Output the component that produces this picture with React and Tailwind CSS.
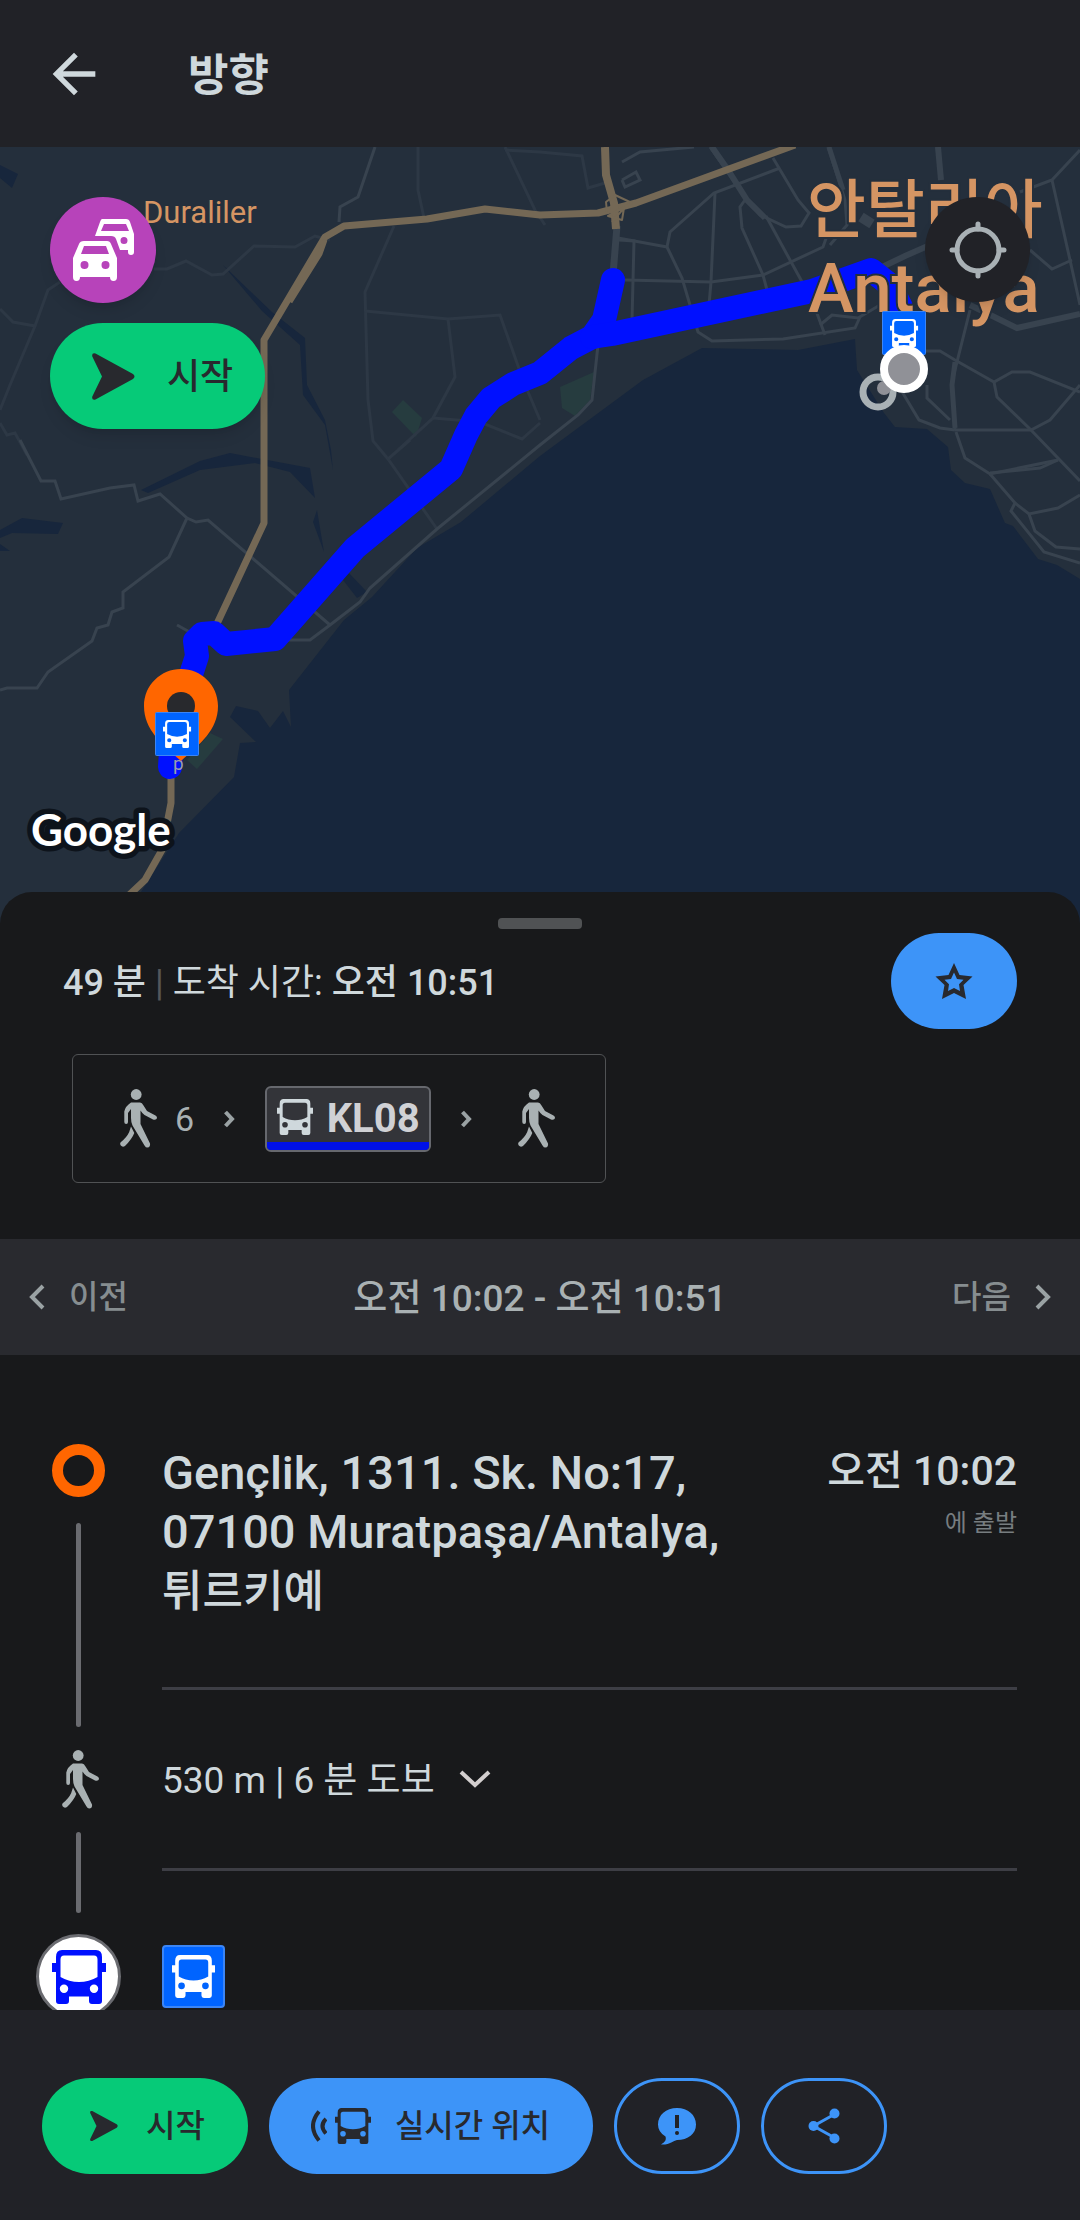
import { MdArrowBack } from "react-icons/md";

const MAJOR_ROADS = [
     // west of the city
     "20,440 41,481 55,481 61,499 110,488 134,485 138,501 160,494 187,518 196,522 208,520 330,625",
     "187,518 169,557 123,592 123,608 112,612 108,625 97,628 92,641 48,672 37,688 7,688 0,690",
     "177,625 195,635",
     "280,640 310,640 330,625 360,602 370,588 437,529 540,445 578,415 592,400 598,345",
     "375,147 358,197 340,207 339,222",
     // city grid
     "622,162 640,152 694,147",
     "622,180 636,172 640,180 625,187 622,180",
     "710,147 740,190 760,215 786,227 801,226 809,213 798,200 773,158",
     "618,238 667,247 670,232 714,193 780,168",
     "619,240 634,241 632,320",
     "715,193 711,282 709,305",
     "667,247 682,278 690,305 698,332 712,341 783,339 855,328 860,317",
     "625,280 711,282 763,275 823,247 829,230",
     "745,200 740,207 742,228 763,275 767,290",
     "766,216 790,260 812,300 825,335",
     "820,325 832,315 858,318 880,305",
     "828,147 845,200 847,225 830,245",
     "937,147 941,180",
     "1080,150 1052,180 1020,192",
     "1052,180 1070,260 1080,305",
     "1030,250 1052,269 1072,260",
     "925,351 940,351 955,360 994,382 1012,372 1030,372 1080,392",
     "970,310 952,382 955,430",
     "901,390 919,420 940,428 955,430",
     "927,385 927,398 950,420",
     "994,382 997,397 1031,430 1080,481",
     "955,430 1031,430 1050,420 1080,385",
     "956,432 965,458 990,474 1058,460",
     "990,474 1015,503 1029,514 1058,508 1080,495",
     "1015,503 1011,511 1044,552 1080,563",
     "1029,514 1035,531 1056,547 1080,549",
     "990,473 1040,468 1058,460"
];

const MINOR_ROADS = [
     "154,269 167,269 186,261 212,275 223,274 254,246 295,247 315,236 330,240",
     "60,282 48,290 35,326 10,385 0,410",
     "0,309 13,322 35,326",
     "0,423 7,435 15,433 27,455",
     "418,147 418,190 424,218",
     "394,226 365,292 368,400 373,441 388,459 437,529",
     "365,311 448,319 500,315 523,380 540,420",
     "448,319 455,377 433,418 398,450",
     "433,418 480,422 522,439 540,423",
     "388,459 410,440",
     "505,147 535,210 545,225",
     "505,150 540,152 582,156 588,188 605,183"
];

const RIVERS = [
     "223,265 272,312 305,338 307,385 325,420 331,450 333,470 325,425 303,395 300,345 262,311",
     "141,490 200,461 230,453 310,468 315,498 290,472 255,463 200,470 148,493",
     "0,530 22,518 63,523 58,534 12,533 0,538",
     "0,165 18,174 12,188 0,178",
     "0,544 10,551 0,551",
     "317,510 324,552 313,522",
     "348,572 367,592 357,598 343,580"
];

const COAST =
     "141,892 179,833 234,777 240,743 256,742 230,717 236,706 258,711 270,728 283,711 291,727 289,690 344,620 372,597 417,548 461,522 540,456 643,380 702,348 798,350 855,339 857,370 884,413 895,427 927,429 948,447 951,470 965,483 990,489 1005,523 1013,526 1038,559 1057,565 1080,579 1080,930 110,930";

function BusIcon({ className }) {
     return (
          <svg viewBox="0 0 54 54" className={className} fill="currentColor" fillRule="evenodd" aria-hidden="true">
               <path d="M10 0H44Q50 0 50 7V13H54V22H50V51Q50 54 47 54H40Q37 54 37 51V46.500H17V51Q17 54 14 54H7Q4 54 4 51V22H0V13H4V7Q4 0 10 0ZM12 5.500Q8.500 5.500 8.500 9.500V27Q17 32 27 32T45.500 27V9.500Q45.500 5.500 42 5.500ZM12 34.500a4.200 4.200 0 1 0 0 8.400a4.200 4.200 0 1 0 0-8.400ZM42 34.500a4.200 4.200 0 1 0 0 8.400a4.200 4.200 0 1 0 0-8.400Z" />
          </svg>
     );
}

function WalkIcon() {
     return (
          <svg viewBox="0 0 37 59" className="h-[59px] w-[37px] shrink-0 text-[#a9b1b3]" fill="currentColor" aria-hidden="true">
               <circle cx="16.200" cy="5.500" r="5.400" />
               <path d="M11 13.500H20Q22 13.500 23.500 16.500L27 22L35.500 26.500Q37.800 28 36.500 30Q35.200 31.300 33 30.500L24.500 26Q22 24 20.500 21.500V35L30 54.500Q30.500 58.500 27.200 58.500Q25.500 58.500 24.500 56.500L12.500 36.500Q11 33.500 11 29V20L8 24V33Q8 35 6.200 35Q4.300 35 4.300 33V22.500Q5.500 17 11 13.500Z" />
               <path d="M11 37.500L14.300 44Q12 50 5 57Q2.500 58.500.8 56.500Q-.6 54.500 1 53Q7 48 9.200 43Z" />
          </svg>
     );
}

function ArrowIcon({ className }) {
     return (
          <svg viewBox="0 0 43 47" className={className} fill="#28292e" aria-hidden="true">
               <path d="M3.500.5L41 21Q44 23.500 41 26L3.500 46.500Q-.5 47.500.3 43.500L10 23.500L.3 3.500Q-.5-.5 3.500.5Z" />
          </svg>
     );
}

function Chevron({ d, viewBox, className, strokeWidth = 4 }) {
     return (
          <svg viewBox={viewBox} className={className} fill="none" stroke="currentColor" strokeWidth={strokeWidth} aria-hidden="true">
               <path d={d} />
          </svg>
     );
}

// Bus stop sign on the map canvas
function StopMarker({ x, y }) {
     return (
          <g transform={`translate(${x} ${y})`}>
               <rect x="0.500" y="0.500" width="43" height="43" rx="1" fill="#0064ff" stroke="#3b85f5" />
               <g transform="translate(8 8) scale(0.52)" fill="#fff" fillRule="evenodd">
                    <path d="M10 0H44Q50 0 50 7V13H54V22H50V51Q50 54 47 54H40Q37 54 37 51V46H17V51Q17 54 14 54H7Q4 54 4 51V22H0V13H4V7Q4 0 10 0ZM12 4Q8 4 8 8V27Q17 32 27 32T46 27V8Q46 4 42 4ZM12 35a4 4 0 1 0 0 8a4 4 0 1 0 0-8ZM42 35a4 4 0 1 0 0 8a4 4 0 1 0 0-8Z" />
               </g>
          </g>
     );
}

function RouteMap() {
     return (
          <svg viewBox="0 147 1080 777" preserveAspectRatio="xMidYMin slice" className="block h-full w-full" role="img" aria-label="Antalya">
               <rect y="147" width="1080" height="777" fill="#242f3c" />
               <polygon points={COAST} fill="#17263c" />
               <g fill="#17263c">
                    {RIVERS.map((points) => (
                         <polygon key={points} points={points} />
                    ))}
               </g>
               <g fill="#263c3f">
                    <polygon points="403,400 422,418 416,437 392,412" />
                    <polygon points="560,387 594,372 590,400 575,416 562,408" />
                    <polygon points="210,733 223,739 197,769 187,760" />
               </g>
               <g fill="none" stroke="#2d3845" strokeWidth="3">
                    {MINOR_ROADS.map((points) => (
                         <polyline key={points} points={points} />
                    ))}
               </g>
               <g fill="none" stroke="#38434f" strokeWidth="3">
                    {MAJOR_ROADS.map((points) => (
                         <polyline key={points} points={points} />
                    ))}
                    <polyline points="617,226 613,275" strokeWidth="7" />
                    <polyline points="712,147 728,170 747,200 765,218" strokeWidth="6" />
                    <polyline points="829,147 843,190" strokeWidth="5" />
                    <polyline points="938,147 941,180" strokeWidth="6" />
                    <polyline points="861,217 872,224" strokeWidth="10" />
                    <polyline points="880,268 905,256 930,245" strokeWidth="6" />
                    <polyline points="970,305 1017,328 1080,314" strokeWidth="6" />
                    <polyline points="955,362 952,385 955,428" strokeWidth="5" />
               </g>
               <g fill="none" stroke="#746855" strokeLinejoin="round">
                    <polyline points="215,628 264,523 264,340 325,237 344,226 427,219 485,209 540,215 598,213 636,203 795,145" strokeWidth="7" />
                    <polyline points="605,147 606,175 614,203 616,229" strokeWidth="8" />
                    <polyline points="607,212 606,202 615,195 632,203 608,216 622,220 624,208 612,222" strokeWidth="2" />
                    <polyline points="171,770 171,803 162,850 145,880 128,896" strokeWidth="7" />
                    <polyline points="325,240 320,254 290,302" strokeWidth="5" />
               </g>
               <g fill="none" stroke="#0010ff" strokeLinejoin="round" strokeLinecap="round">
                    <polyline
                         points="170,767 172,735 186,690 197,656 195,641 202,634 214,633 226,644 275,639 355,548 451,469 466,435 476,416 491,398 513,384 540,373 571,348 592,337 604,320 613,280"
                         strokeWidth="24"
                    />
                    <polyline points="592,337 612,334 812,291 871,270 890,285 901,307" strokeWidth="24" />
               </g>
               <text x="173" y="770" fontSize="19" fill="#9a9cae" className="font-['Roboto']">p</text>

               <g fill="#d59563" stroke="#242f3c" strokeWidth="4" paintOrder="stroke" className="font-['Roboto','Noto_Sans_CJK_KR',sans-serif]">
                    <text x="143" y="223" fontSize="31">Duraliler</text>
                    <text x="807" y="232" fontSize="64" fontWeight="500">안탈리아</text>
                    <text x="808" y="312" fontSize="69" fontWeight="500">Antalya</text>
               </g>

               <circle cx="878" cy="392" r="15" fill="none" stroke="#a9b1b5" strokeWidth="7" />
               <circle cx="884" cy="388" r="7" fill="#909197" />
               <StopMarker x={882} y={311} />
               <circle cx="904" cy="369" r="20" fill="#909197" stroke="#fff" strokeWidth="8" />

               <path d="M181 669C201 669 218 685 218 706C218 730 200 744 181 761C162 744 144 730 144 706C144 685 161 669 181 669Z" fill="#ff6600" />
               <circle cx="181" cy="706" r="14" fill="#28292d" />
               <StopMarker x={155} y={712} />

               <text x="31" y="846" fontSize="44" fontWeight="700" fill="#fff" stroke="#0d131b" strokeWidth="11" strokeLinejoin="round" paintOrder="stroke" className="font-['Lato',sans-serif]">
                    Google
               </text>
          </svg>
     );
}

export default function App() {
     return (
          <div className="flex h-screen flex-col bg-[#18191b] font-['Roboto','Noto_Sans_CJK_KR',sans-serif] text-[#cfd8dc]">
               <header className="flex h-[147px] shrink-0 items-center gap-[82px] bg-[#212227] px-[42px]">
                    <button aria-label="뒤로">
                         <MdArrowBack size={64} />
                    </button>
                    <h1 className="pt-1 text-[44px] leading-[60px] font-bold">방향</h1>
               </header>

               <section className="relative h-[35vh] shrink-0">
                    <RouteMap />
                    <div className="absolute top-[50px] left-[50px] flex flex-col items-start gap-5">
                         <button aria-label="교통정보" className="flex size-[106px] items-center justify-center rounded-full bg-[#b743ba] shadow-lg">
                              <svg viewBox="0 0 61 62" className="h-[62px] w-[61px]" fill="#fff" fillRule="evenodd" aria-hidden="true">
                                   <path d="M29 0H53Q56 0 57 3L61 15V33Q61 36 58 36Q55 36 55 33V31H47L43 20Q42 17 38 17H22L27 3Q28 0 29 0ZM31 5L28 12H56L53 5ZM51 18a3.500 3.500 0 1 0 0 7a3.500 3.500 0 1 0 0-7Z" />
                                   <path d="M11 22H34Q37 22 38 25L44 39V58Q44 62 40.500 62Q37 62 37 58H7Q7 62 3.500 62Q0 62 0 58V39L6 25Q7 22 11 22ZM11 27L8 35H36L33 27ZM11.500 42a4 4 0 1 0 0 8a4 4 0 1 0 0-8ZM32.500 42a4 4 0 1 0 0 8a4 4 0 1 0 0-8Z" />
                              </svg>
                         </button>
                         <button className="flex h-[106px] items-center gap-8 rounded-full bg-[#06ca78] pr-8 pl-[42px] text-[36px] font-medium text-[#28292e] shadow-lg">
                              <ArrowIcon className="h-[47px] w-[43px]" />
                              <span className="pt-0.5">시작</span>
                         </button>
                    </div>
                    <button aria-label="내 위치" className="absolute top-[50px] right-[50px] flex size-[105px] items-center justify-center rounded-full bg-[#212227] shadow-lg">
                         <svg viewBox="0 0 58 58" className="size-[58px]" fill="none" stroke="#a9b1b5" strokeWidth="5" strokeLinecap="round" aria-hidden="true">
                              <circle cx="29" cy="29" r="21" />
                              <path d="M29 3V8M29 50V55M3 29H8M50 29H55" />
                         </svg>
                    </button>
               </section>

               <main className="relative -mt-8 flex min-h-0 flex-1 flex-col overflow-y-auto rounded-t-[32px] bg-[#18191b] [scrollbar-width:none]">
                    <div className="mx-auto mt-[26px] h-[11px] w-[84px] shrink-0 rounded bg-[#505254]" />

                    <div className="mt-1 flex shrink-0 items-center justify-between px-[63px]">
                         <p className="pt-1 text-[36px] leading-[48px]">
                              <span className="font-medium">49 분</span>
                              <span className="text-[#55575a]"> | </span>
                              도착 시간: <span className="font-medium">오전 10:51</span>
                         </p>
                         <button aria-label="즐겨찾기" className="flex h-[96px] w-[126px] items-center justify-center rounded-full bg-[#3d94f8]">
                              <svg viewBox="0 0 38 36" className="h-9 w-[38px]" fill="#28292e" fillRule="evenodd" aria-hidden="true">
                                   <path d="M19 0L24.500 12L37.500 13.500L28.500 22L31 36L19 30L7 36L9.500 22L.5 13.500L13.500 12ZM19 9.500L16 16L9.500 16.800L14 21.300L13 28L19 25L25 28L24 21.300L28.500 16.800L22 16Z" />
                              </svg>
                         </button>
                    </div>

                    <div className="mt-[25px] ml-[72px] flex h-[129px] shrink-0 items-center self-start rounded-md border border-[#505254] pr-[50px] pl-[47px]">
                         <WalkIcon />
                         <span className="ml-[18px] pt-0.5 text-[34px] text-[#a9b1b3]">6</span>
                         <Chevron viewBox="0 0 11 18" d="M1.500 2L8 9L1.500 16" className="ml-[30px] h-[18px] w-[11px] text-[#9aa2a4]" />
                         <div className="ml-[30px] flex h-[66px] w-[166px] flex-col overflow-hidden rounded-md border-2 border-[#66686e] bg-[#333439]">
                              <div className="flex flex-1 items-center justify-center gap-[14px] pt-1">
                                   <BusIcon className="size-9 shrink-0" />
                                   <span className="pt-1 text-[40px] leading-10 font-bold text-[#d0d1d5]">KL08</span>
                              </div>
                              <div className="h-2 bg-[#0010e8]" />
                         </div>
                         <Chevron viewBox="0 0 11 18" d="M1.500 2L8 9L1.500 16" className="mr-[46px] ml-[30px] h-[18px] w-[11px] text-[#9aa2a4]" />
                         <WalkIcon />
                    </div>

                    <nav className="mt-14 flex h-[116px] shrink-0 items-center justify-between bg-[#292a2f] px-7 text-[32px] font-medium text-[#868d90]">
                         <button className="flex items-center gap-6">
                              <Chevron viewBox="0 0 17 26" d="M15 2L4 13L15 24" className="h-[26px] w-[17px] text-[#9aa2a4]" />
                              이전
                         </button>
                         <span className="pt-1 text-[37px] text-[#a9b1b3]">오전 10:02 - 오전 10:51</span>
                         <button className="flex items-center gap-6">
                              다음
                              <Chevron viewBox="0 0 17 26" d="M2 2L13 13L2 24" className="h-[26px] w-[17px] text-[#9aa2a4]" />
                         </button>
                    </nav>

                    <div className="flex">
                         <div className="flex w-[162px] shrink-0 flex-col items-center pt-[89px] pr-[5px]">
                              <div className="size-[53px] rounded-full border-[11px] border-[#ff6600]" />
                              <div className="mt-[26px] h-[204px] w-[5px] rounded bg-[#6a6b70]" />
                              <div className="my-[23px] pl-1">
                                   <WalkIcon />
                              </div>
                              <div className="h-[81px] w-[5px] rounded bg-[#6a6b70]" />
                              <div className="mt-[21px] flex size-[85px] items-center justify-center rounded-full border-[3px] border-[#6a6b70] bg-white text-[#0010ff]">
                                   <BusIcon className="size-[54px]" />
                              </div>
                         </div>

                         <ol className="min-w-0 flex-1 pr-[63px]">
                              <li className="flex h-[335px] justify-between border-b-[3px] border-[#3d3e45] pt-[88px]">
                                   <p className="max-w-[600px] text-[47px] leading-[59px] font-medium">
                                        Gençlik, 1311. Sk. No:17, 07100 Muratpaşa/Antalya, <span className="text-[44px]">튀르키예</span>
                                   </p>
                                   <div className="shrink-0 text-right">
                                        <p className="text-[41px] leading-[56px] font-medium">오전 10:02</p>
                                        <p className="mt-1 text-[24px] leading-10 text-[#777d80]">에 출발</p>
                                   </div>
                              </li>
                              <li className="flex h-[181px] items-center border-b-[3px] border-[#3d3e45]">
                                   <button className="flex items-center gap-6 text-[37px]">
                                        <span className="pt-1">530 m | 6 분 도보</span>
                                        <Chevron viewBox="0 0 32 18" d="M2 2L16 15L30 2" className="h-[18px] w-8 text-[#d3cfcf]" />
                                   </button>
                              </li>
                              <li className="pt-[74px]">
                                   <div className="flex size-[63px] items-center justify-center rounded border-2 border-[#3b85f5] bg-[#0064ff] text-white">
                                        <BusIcon className="size-[43px]" />
                                   </div>
                              </li>
                         </ol>
                    </div>
               </main>

               <footer className="relative flex shrink-0 gap-[21px] bg-[#212227] px-[42px] pt-[68px] pb-[46px] text-[32px] font-medium text-[#28292e]">
                    <button className="flex h-[96px] items-center gap-7 rounded-full bg-[#06ca78] pr-[43px] pl-12">
                         <ArrowIcon className="h-8 w-7" />
                         시작
                    </button>
                    <button className="flex h-[96px] items-center gap-6 rounded-full bg-[#3d94f8] pr-[43px] pl-[42px]">
                         <span className="flex items-center gap-2">
                              <svg viewBox="0 0 16 32" className="h-8 w-4" fill="none" stroke="currentColor" strokeWidth="4" aria-hidden="true">
                                   <path d="M8 1.500Q-4 16 8 30.500M15 9Q8 16 15 23.500" />
                              </svg>
                              <BusIcon className="size-9" />
                         </span>
                         실시간 위치
                    </button>
                    <button aria-label="문제 신고" className="flex h-[96px] w-[126px] items-center justify-center rounded-full border-[3px] border-[#3d94f8]">
                         <svg viewBox="0 0 38 37" className="h-[37px] w-[38px]" aria-hidden="true">
                              <path d="M19 0C30 0 38 7 38 16.500S30 32 19 32C15 33 12 37 3 36.500C7 34 8.500 32 7.500 28.500Q0 24 0 16.500C0 7 8 0 19 0Z" fill="#3d94f8" />
                              <path d="M17 7H21V20H17Z" fill="#212227" />
                              <circle cx="19" cy="25" r="2" fill="#212227" />
                         </svg>
                    </button>
                    <button aria-label="공유" className="flex h-[96px] w-[126px] items-center justify-center rounded-full border-[3px] border-[#3d94f8]">
                         <svg viewBox="0 0 32 36" className="h-9 w-8" fill="#3d94f8" aria-hidden="true">
                              <path d="M27 6L5.500 18L27 30" fill="none" stroke="#3d94f8" strokeWidth="3" />
                              <circle cx="26.500" cy="5.500" r="5" />
                              <circle cx="5.500" cy="18" r="5" />
                              <circle cx="26.500" cy="30.500" r="5" />
                         </svg>
                    </button>
               </footer>
          </div>
     );
}
